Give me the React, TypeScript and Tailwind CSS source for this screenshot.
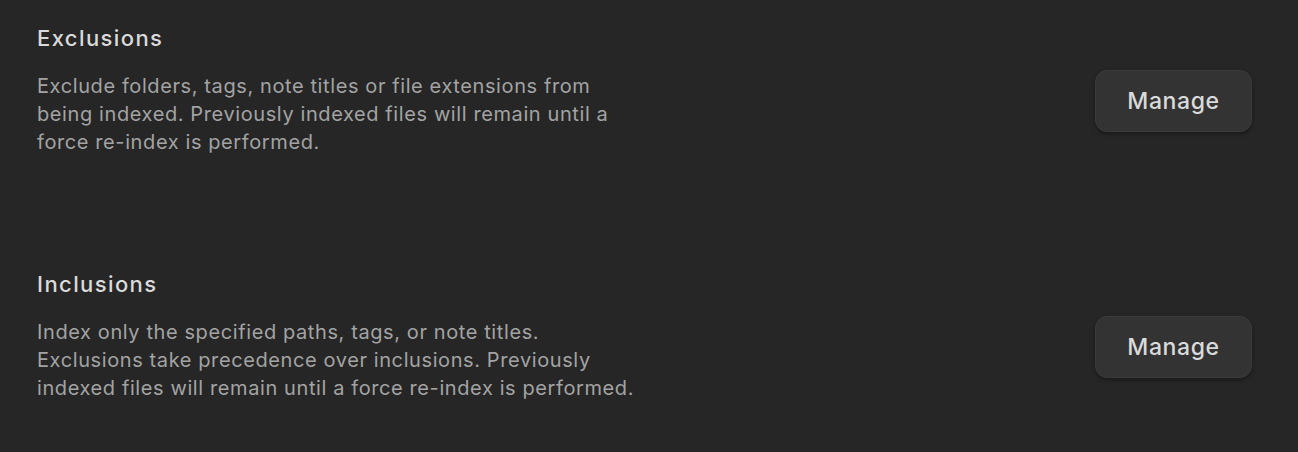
export default function App() {
  return (
    <div className="flex min-h-screen flex-col gap-[114px] bg-[#262626] px-[37px] pt-[24px] font-['Inter',_'Noto_Sans',_sans-serif] antialiased">
      <SettingRow
        title="Exclusions"
        desc={
          <>
            Exclude folders, tags, note titles or file extensions from
            <br />
            being indexed. Previously indexed files will remain until a
            <br />
            force re-index is performed.
          </>
        }
      />
      <SettingRow
        title="Inclusions"
        desc={
          <>
            Index only the specified paths, tags, or note titles.
            <br />
            Exclusions take precedence over inclusions. Previously
            <br />
            indexed files will remain until a force re-index is performed.
          </>
        }
      />
    </div>
  );
}

function SettingRow({ title, desc }: { title: string; desc: React.ReactNode }) {
  return (
    <div className="flex items-start justify-between">
      <div className="flex flex-col">
        <div className="text-[22px] font-medium leading-[28px] tracking-[1.4px] text-[#dadada]">{title}</div>
        <div className="mt-[20px] text-[20px] leading-[28px] tracking-[0.6px] text-[#a3a3a3]">{desc}</div>
      </div>
      <button className="mr-[9px] mt-[46px] h-[62px] w-[157px] rounded-[12px] border border-[#3a3a3a] bg-[#333333] text-[23px] font-medium tracking-[0.6px] text-[#dadada] shadow-[0_2px_4px_rgba(0,0,0,0.35)]">
        Manage
      </button>
    </div>
  );
}
